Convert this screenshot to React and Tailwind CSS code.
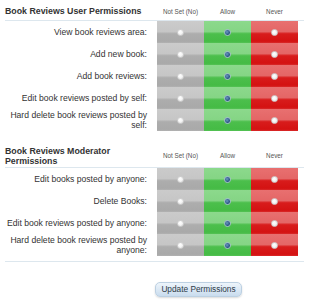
import React from "react";

const sec1 = [
  ["View book reviews area:"],
  ["Add new book:"],
  ["Add book reviews:"],
  ["Edit book reviews posted by self:"],
  ["Hard delete book reviews posted by", "self:"],
];
const sec2 = [
  ["Edit books posted by anyone:"],
  ["Delete Books:"],
  ["Edit book reviews posted by anyone:"],
  ["Hard delete book reviews posted by", "anyone:"],
];

function Radio({ on }) {
  return on ? (
    <span className="block w-[7px] h-[7px] rounded-full border border-[#a5bccf] bg-[radial-gradient(circle_at_40%_40%,#6a98c0_0%,#23507c_70%)]" />
  ) : (
    <span className="block w-[7px] h-[7px] rounded-full border border-[#d0d0d0] bg-[radial-gradient(circle_at_40%_35%,#ffffff_0%,#f4f4f4_50%,#dcdcdc_100%)]" />
  );
}

function Row({ label }) {
  return (
    <div className="flex h-[22px]">
      <div className="w-[142px] flex flex-col justify-center items-end text-right text-[8.6px] leading-[10px] text-[#333]">
        {label.map((l, i) => (
          <span key={i} className="whitespace-nowrap">{l}</span>
        ))}
      </div>
      <div className="ml-[10px] flex">
        <div className="w-[47px] flex items-center justify-center bg-[linear-gradient(#cbcbcb_0%,#c6c6c6_48%,#adadad_58%,#a9a9a9_92%,#b2b2b2_100%)]">
          <Radio />
        </div>
        <div className="w-[47px] flex items-center justify-center bg-[linear-gradient(#8cd98c_0%,#85d585_48%,#4cbf4c_58%,#45bb45_92%,#55c255_100%)]">
          <Radio on />
        </div>
        <div className="w-[47px] flex items-center justify-center bg-[linear-gradient(#e87070_0%,#e46666_48%,#d81c1c_58%,#d41212_92%,#d92a2a_100%)]">
          <Radio />
        </div>
      </div>
    </div>
  );
}

function Headers() {
  return (
    <div className="ml-[10px] flex text-[6.3px] text-[#555]">
      <div className="w-[47px] text-center">Not Set (No)</div>
      <div className="w-[47px] text-center">Allow</div>
      <div className="w-[47px] text-center">Never</div>
    </div>
  );
}

export default function App() {
  return (
    <div
      className="w-[309px] h-[300px] bg-white px-[5px]"
      style={{ fontFamily: '"Liberation Sans", Arial, sans-serif' }}
    >
      <div className="flex items-center h-[21px] border-b border-[#dde7ee] pt-[4px]">
        <div className="w-[142px] text-[8.8px] font-bold text-[#333] whitespace-nowrap">
          Book Reviews User Permissions
        </div>
        <Headers />
      </div>
      {sec1.map((l, i) => (
        <Row key={i} label={l} />
      ))}
      <div className="flex items-center h-[37px] border-b border-[#dde7ee] pt-[14px]">
        <div className="w-[142px] text-[8.8px] leading-[10px] font-bold text-[#333]">
          Book Reviews Moderator
          <br />
          Permissions
        </div>
        <Headers />
      </div>
      {sec2.map((l, i) => (
        <Row key={i} label={l} />
      ))}
      <div className="mt-[5px] border-b border-[#dde7ee]" />
      <div className="pl-[150px] pt-[13px]">
        <button className="w-[87px] h-[15px] rounded-[5px] border border-[#bcd0e2] bg-[linear-gradient(#eef5fb,#c9dcee)] shadow-[0_1px_2px_rgba(0,0,0,0.15)] text-[8.3px] text-[#2e3b48] leading-none whitespace-nowrap">
          Update Permissions
        </button>
      </div>
    </div>
  );
}
